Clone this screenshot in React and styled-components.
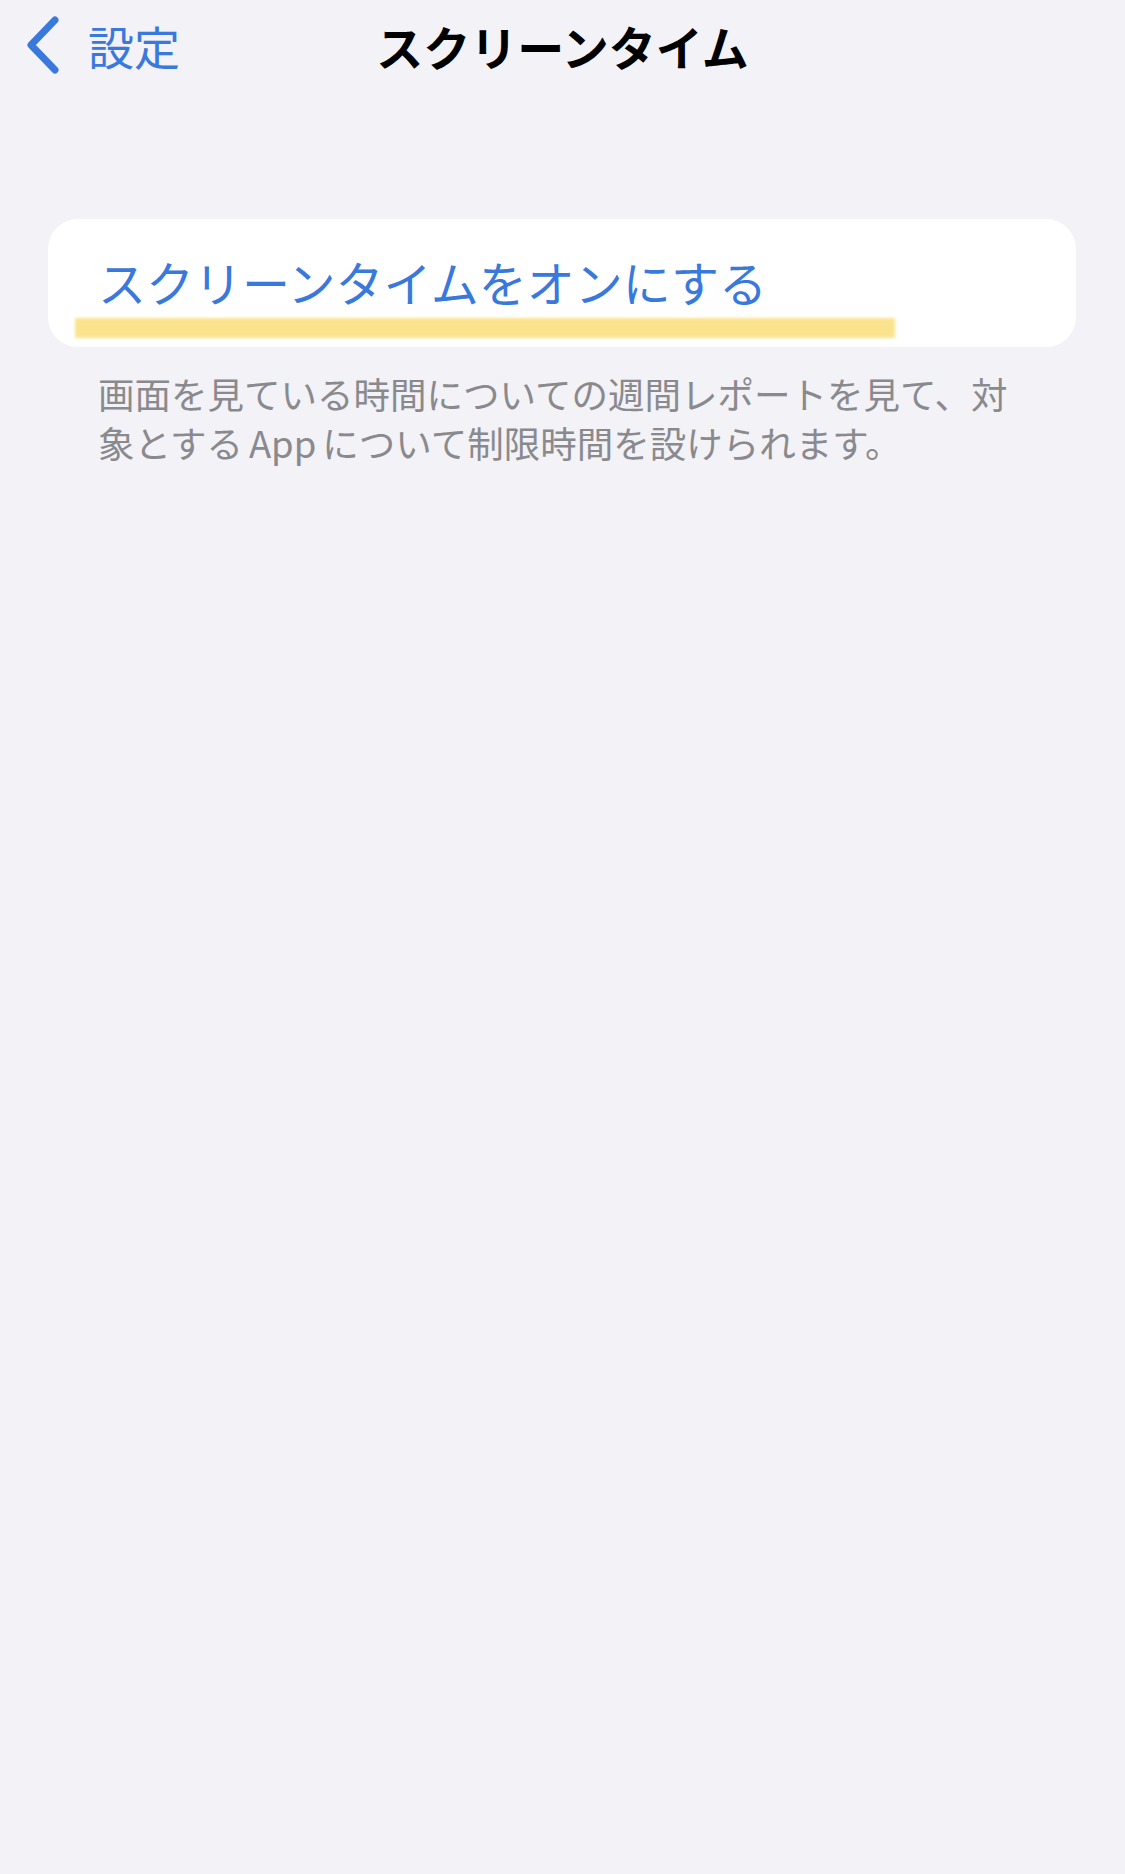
import React from 'react';
import styled, { createGlobalStyle } from 'styled-components';

const GlobalStyle = createGlobalStyle`
  html, body {
    margin: 0;
    padding: 0;
    background: #f2f2f7;
  }
  body {
    font-family: 'Noto Sans CJK JP', 'Noto Sans', sans-serif;
  }
`;

const Page = styled.div`
  min-height: 1874px;
  background: #f2f2f7;
`;

const NavBar = styled.header`
  display: grid;
  grid-template-columns: 1fr auto 1fr;
  align-items: center;
  height: 90px;
`;

const BackButton = styled.div`
  display: flex;
  align-items: center;
  gap: 25px;
  padding-left: 23px;
  color: #3a79dc;
  font-size: 46px;
  line-height: 1;
`;

const Title = styled.h1`
  margin: 0;
  font-size: 47px;
  font-weight: 700;
  color: #000;
`;

const Card = styled.section`
  margin: 129px 49px 0 48px;
  background: #fff;
  border-radius: 30px;
  padding: 33px 0 9px 50px;
`;

const CardLabel = styled.div`
  font-size: 48px;
  line-height: 58px;
  color: #3a79dc;
`;

const Highlight = styled.div`
  width: 820px;
  height: 20px;
  margin: 8px 0 0 -23px;
  background: #fbe38e;
  filter: blur(1.5px);
`;

const Footer = styled.p`
  margin: 22px 0 0 98px;
  font-size: 36.5px;
  line-height: 49px;
  color: #8a8a8e;
`;

const Latin = styled.span`
  margin: 0 6px;
`;

const Chevron = () => (
  <svg width="40" height="62" viewBox="0 0 40 62">
    <polyline
      points="32,6 8,31 32,56"
      fill="none"
      stroke="#3a79dc"
      strokeWidth="7"
      strokeLinecap="round"
      strokeLinejoin="round"
    />
  </svg>
);

export default function App() {
  return (
    <Page>
      <GlobalStyle />
      <NavBar>
        <BackButton>
          <Chevron />
          <span>設定</span>
        </BackButton>
        <Title>スクリーンタイム</Title>
        <div />
      </NavBar>
      <Card>
        <CardLabel>スクリーンタイムをオンにする</CardLabel>
        <Highlight />
      </Card>
      <Footer>
        画面を見ている時間についての週間レポートを見て、対<br />
        象とする<Latin>App</Latin>について制限時間を設けられます。
      </Footer>
    </Page>
  );
}
